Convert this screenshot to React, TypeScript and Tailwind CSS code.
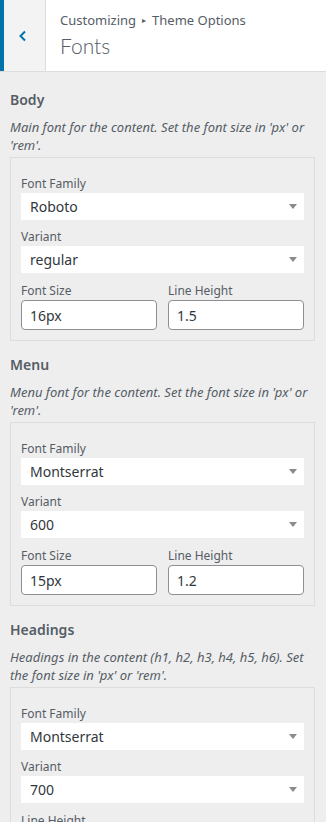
import React from 'react';

type Field =
  | { kind: 'select'; label: string; value: string }
  | { kind: 'pair'; left: { label: string; value: string }; right: { label: string; value: string } }
  | { kind: 'label'; label: string };

interface Section {
  title: string;
  description: string;
  fields: Field[];
}

const sections: Section[] = [
  {
    title: 'Body',
    description: "Main font for the content. Set the font size in 'px' or 'rem'.",
    fields: [
      { kind: 'select', label: 'Font Family', value: 'Roboto' },
      { kind: 'select', label: 'Variant', value: 'regular' },
      { kind: 'pair', left: { label: 'Font Size', value: '16px' }, right: { label: 'Line Height', value: '1.5' } },
    ],
  },
  {
    title: 'Menu',
    description: "Menu font for the content. Set the font size in 'px' or 'rem'.",
    fields: [
      { kind: 'select', label: 'Font Family', value: 'Montserrat' },
      { kind: 'select', label: 'Variant', value: '600' },
      { kind: 'pair', left: { label: 'Font Size', value: '15px' }, right: { label: 'Line Height', value: '1.2' } },
    ],
  },
  {
    title: 'Headings',
    description: "Headings in the content (h1, h2, h3, h4, h5, h6). Set the font size in 'px' or 'rem'.",
    fields: [
      { kind: 'select', label: 'Font Family', value: 'Montserrat' },
      { kind: 'select', label: 'Variant', value: '700' },
      { kind: 'label', label: 'Line Height' },
    ],
  },
];

function Label({ children }: { children: React.ReactNode }) {
  return <div className="h-[18px] text-[12px] leading-[18px] text-[#555d66]">{children}</div>;
}

function Select({ value }: { value: string }) {
  return (
    <div className="flex h-[27px] items-center justify-between bg-white pl-[9px] pr-[7px] text-[14px] text-[#32373c]">
      <span>{value}</span>
      <span className="h-0 w-0 border-x-[4px] border-t-[5px] border-x-transparent border-t-[#8a8a8a]" />
    </div>
  );
}

function Input({ value }: { value: string }) {
  return (
    <div className="flex h-[30px] items-center rounded-[4px] border border-[#8c8f94] bg-white px-[8px] text-[14px] text-[#32373c]">
      {value}
    </div>
  );
}

export default function App() {
  return (
    <div
      className="h-[822px] w-[326px] overflow-hidden bg-[#eeeeee]"
      style={{ fontFamily: '"Noto Sans", "Open Sans", sans-serif' }}
    >
      {/* Header */}
      <div className="flex h-[72px] border-b border-[#dddddd] bg-white">
        <div className="flex w-[46px] items-center justify-center border-l-[4px] border-r border-l-[#0073aa] border-r-[#dddddd] bg-[#f3f3f3]">
          <svg width="10" height="12" viewBox="0 0 10 12" className="mr-[4px]">
            <path d="M7 1.5 L2.5 6 L7 10.5" fill="none" stroke="#0073aa" strokeWidth="2" />
          </svg>
        </div>
        <div className="flex flex-col pl-[14px] pt-[11px]">
          <div className="flex items-center text-[13px] leading-[18px] text-[#555d66]">
            <span>Customizing</span>
            <span className="mx-[6px] text-[8px]">▸</span>
            <span>Theme Options</span>
          </div>
          <div
            className="mt-[3px] text-[21px] font-light leading-[28px] text-[#555d66]"
            style={{ fontFamily: 'Lato, "Noto Sans", sans-serif' }}
          >
            Fonts
          </div>
        </div>
      </div>

      {/* Sections */}
      <div className="pl-[10px] pr-[11px] pt-[18px]">
        {sections.map((section, i) => (
          <div key={i} className="mb-[14px]">
            <div className="h-[20px] text-[14px] font-semibold leading-[20px] text-[#555d66]">{section.title}</div>
            <p className="mt-[8px] text-[13px] italic leading-[18px] text-[#555d66]">{section.description}</p>
            <div className="mt-[3px] border border-[#dddddd] px-[10px] pb-[10px] pt-[17px]">
              {section.fields.map((field, j) => {
                if (field.kind === 'select') {
                  return (
                    <div key={j} className={j > 0 ? 'mt-[8px]' : ''}>
                      <Label>{field.label}</Label>
                      <Select value={field.value} />
                    </div>
                  );
                }
                if (field.kind === 'pair') {
                  return (
                    <div key={j} className="mt-[9px] grid grid-cols-2 gap-[11px]">
                      <div>
                        <Label>{field.left.label}</Label>
                        <Input value={field.left.value} />
                      </div>
                      <div>
                        <Label>{field.right.label}</Label>
                        <Input value={field.right.value} />
                      </div>
                    </div>
                  );
                }
                return (
                  <div key={j} className="mt-[9px]">
                    <Label>{field.label}</Label>
                  </div>
                );
              })}
            </div>
          </div>
        ))}
      </div>
    </div>
  );
}
